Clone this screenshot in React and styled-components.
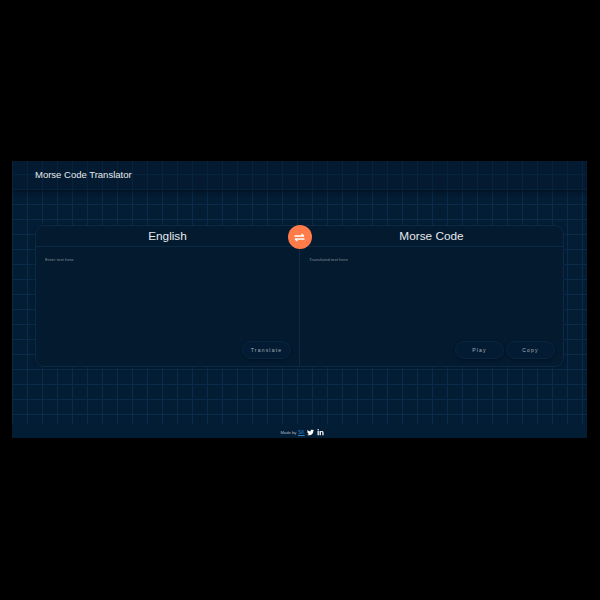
import React, { useState } from "react";
import styled, { createGlobalStyle } from "styled-components";
import { FaTwitter, FaLinkedinIn } from "react-icons/fa";

const GlobalStyle = createGlobalStyle`
  html, body {
    margin: 0;
    height: 100%;
    background: #000;
  }
  #root {
    height: 100%;
  }
`;

const Page = styled.div`
  height: 600px;
  display: flex;
  align-items: center;
  justify-content: center;
  font-family: "Liberation Sans", Arial, sans-serif;
`;

const Frame = styled.div`
  width: 575px;
  height: 277px;
  margin: -1px 0 0 -1px;
  display: flex;
  flex-direction: column;
  background-color: #031d35;
`;

const Workspace = styled.div`
  flex: 1;
  display: flex;
  flex-direction: column;
  background-color: #031d35;
  background-image:
    linear-gradient(to right, #0a2c4a 1px, transparent 1px),
    linear-gradient(to bottom, #0a2c4a 1px, transparent 1px);
  background-size: 15px 15px;
  background-position: 0 13px;
`;

const Header = styled.header`
  height: 29px;
  display: flex;
  align-items: center;
  padding: 0 23px;
  box-shadow: 0 2px 5px rgba(0, 0, 0, 0.45);
  background: rgba(2, 20, 38, 0.3);
`;

const Title = styled.h1`
  margin: 0 0 3px;
  font-size: 9.5px;
  font-weight: 400;
  color: #e6e9ec;
`;

const Main = styled.main`
  flex: 1;
  padding: 35px 23px 0;
`;

const Card = styled.section`
  position: relative;
  height: 142px;
  display: grid;
  grid-template-columns: 263px 1fr;
  box-sizing: border-box;
  background: #031a2f;
  border: 1px solid #0a2a46;
  border-radius: 9px;
  box-shadow: 0 1px 4px rgba(0, 0, 0, 0.25);
`;

const Pane = styled.div`
  display: flex;
  flex-direction: column;
  min-width: 0;
  border-left: ${(props) => (props.$divided ? "1px solid #0a2a46" : "none")};
`;

const PaneTitle = styled.h2`
  margin: 0;
  height: 21px;
  flex: none;
  display: flex;
  align-items: center;
  justify-content: center;
  box-sizing: border-box;
  border-bottom: 1px solid #0a2a46;
  font-size: 11.8px;
  font-weight: 400;
  color: #e6e9ec;
`;

const PaneBody = styled.div`
  flex: 1;
  display: flex;
  flex-direction: column;
  padding: 10px 8px 7px 9px;
`;

const TextArea = styled.textarea`
  flex: 1;
  padding: 0;
  border: none;
  outline: none;
  resize: none;
  background: transparent;
  font-family: inherit;
  font-size: 4.4px;
  color: #c7ced6;

  &::placeholder {
    color: #7f8a96;
    opacity: 1;
  }
`;

const Actions = styled.div`
  display: flex;
  justify-content: flex-end;
  gap: 2px;
`;

const ActionButton = styled.button`
  width: 49px;
  height: 18px;
  padding: 0;
  border: 1px solid #08253f;
  border-radius: 9px;
  background: #041c33;
  box-shadow: 0 1px 3px rgba(0, 0, 0, 0.3);
  font-family: inherit;
  font-size: 5px;
  letter-spacing: 1.2px;
  color: #a9b2bc;
  cursor: pointer;
`;

const SwapButton = styled.button`
  position: absolute;
  top: -1px;
  left: 251.5px;
  width: 24px;
  height: 24px;
  padding: 0;
  display: flex;
  align-items: center;
  justify-content: center;
  border: none;
  border-radius: 50%;
  background: #ff7b4a;
  cursor: pointer;
`;

const Footer = styled.footer`
  height: 14px;
  flex: none;
  display: flex;
  align-items: center;
  justify-content: center;
  gap: 1.5px;
  padding: 2px 0 0 5px;
  box-sizing: border-box;
  font-size: 4.2px;
  color: #aeb6bf;
  background: #031d35;
`;

const AuthorLink = styled.a`
  color: #2f7fc1;
  font-size: 5px;
  text-decoration: underline;
`;

const SocialLink = styled.a`
  display: flex;
  margin-left: 1px;
  color: #fff;
  font-size: 7px;
`;

const SwapIcon = () => (
  <svg width="11" height="11" viewBox="0 0 11 11" fill="none" stroke="#fff" strokeWidth="1.3">
    <path d="M0.5 4H10M7.5 2L10 4" />
    <path d="M10.5 7H1M3.5 9L1 7" />
  </svg>
);

const placeholders = { en: "Enter text here", morse: "Translated text here" };

export default function App() {
  const [source, setSource] = useState("");
  const [result, setResult] = useState("");

  return (
    <Page>
      <GlobalStyle />
      <Frame>
        <Workspace>
          <Header>
            <Title>Morse Code Translator</Title>
          </Header>
          <Main>
            <Card>
              <Pane>
                <PaneTitle>English</PaneTitle>
                <PaneBody>
                  <TextArea
                    placeholder={placeholders.en}
                    value={source}
                    onChange={(e) => setSource(e.target.value)}
                  />
                  <Actions>
                    <ActionButton>Translate</ActionButton>
                  </Actions>
                </PaneBody>
              </Pane>
              <Pane $divided>
                <PaneTitle>Morse Code</PaneTitle>
                <PaneBody>
                  <TextArea
                    placeholder={placeholders.morse}
                    value={result}
                    onChange={(e) => setResult(e.target.value)}
                  />
                  <Actions>
                    <ActionButton>Play</ActionButton>
                    <ActionButton>Copy</ActionButton>
                  </Actions>
                </PaneBody>
              </Pane>
              <SwapButton aria-label="Swap languages">
                <SwapIcon />
              </SwapButton>
            </Card>
          </Main>
        </Workspace>
        <Footer>
          <span>Made by</span>
          <AuthorLink href="#">SK</AuthorLink>
          <SocialLink href="#" aria-label="Twitter">
            <FaTwitter />
          </SocialLink>
          <SocialLink href="#" aria-label="LinkedIn">
            <FaLinkedinIn />
          </SocialLink>
        </Footer>
      </Frame>
    </Page>
  );
}
